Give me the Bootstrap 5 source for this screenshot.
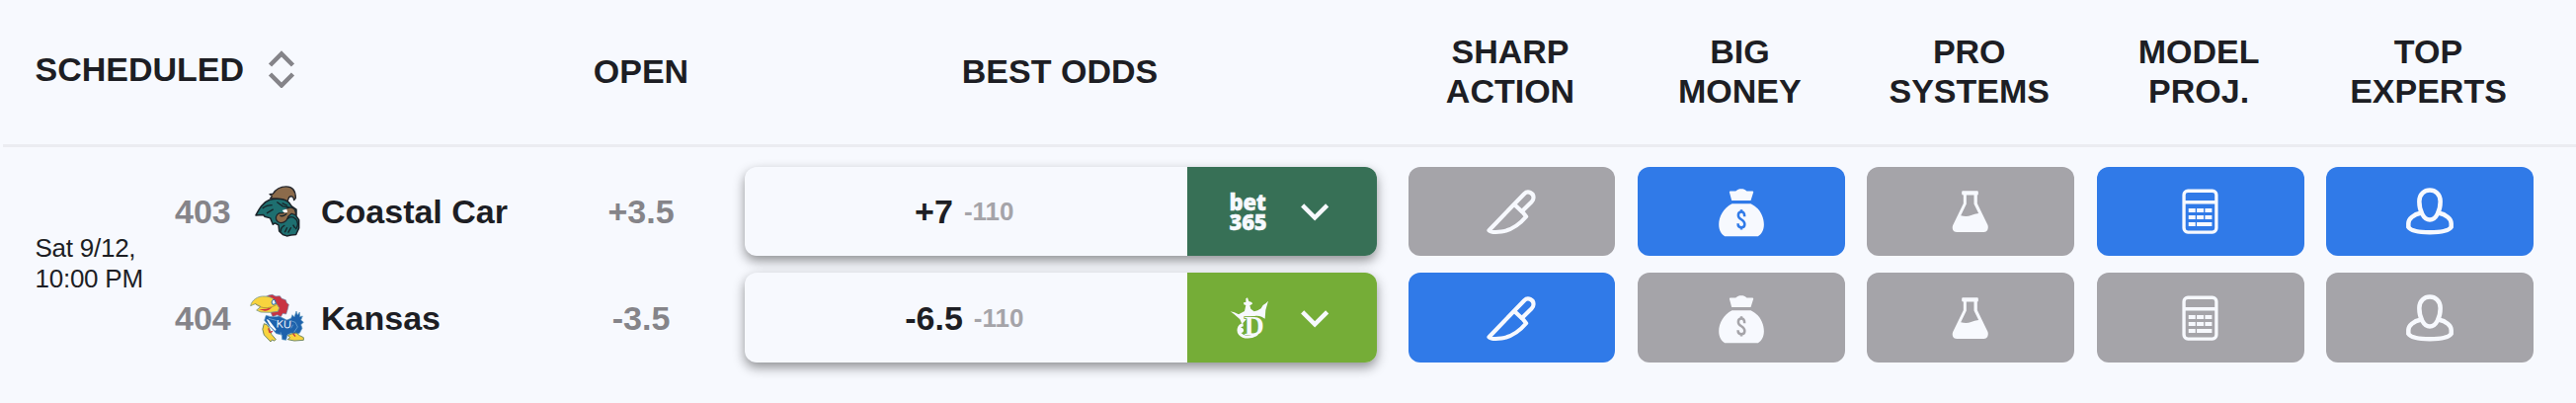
<!DOCTYPE html>
<html lang="en">
<head>
  <meta charset="UTF-8">
  <meta name="viewport" content="width=device-width, initial-scale=1.0">
  <title>Best Odds</title>
  <link href="https://cdn.jsdelivr.net/npm/bootstrap@5.3.0/dist/css/bootstrap.min.css" rel="stylesheet">
  <style>
    body {
      min-height: 100vh;
      background-color: #f7f9fe;
      color: #1d1e24;
      font-family: "Liberation Sans", Arial, sans-serif;
      font-size: 34px;
      line-height: 40px;
    }
    .board-head {
      height: 149px;
      margin-left: 3px;
      padding: 0 43px 3px 32.5px;
      border-bottom: 3px solid #ebecf1;
    }
    .head-scheduled { width: 526.5px; padding-bottom: 3px; }
    .head-open { width: 174px; }
    .head-odds { width: 638px; margin-left: 18px; }
    .head-signals { margin-left: 32px; }
    .board-body { padding: 19.9px 43px 0 35.5px; }
    .game-time {
      width: 141.5px;
      font-size: 26px;
      line-height: 31px;
      letter-spacing: -.25px;
      padding-bottom: 1px;
    }
    .game-lines { gap: 17.2px; }
    .game-line { height: 90.4px; }
    .line-no { width: 74px; }
    .line-logo { width: 60px; height: 60px; }
    .line-team { width: 237px; margin-left: 14px; }
    .line-open { width: 174px; }
    .muted-val { color: #858489; }
    .odds-box {
      width: 640px;
      margin-left: 18px;
      border-radius: 12px;
      background-color: #f7f9fe;
      box-shadow: 0 5px 12px rgba(0, 0, 0, .42);
    }
    .odds-price { gap: 11px; padding-right: 3px; }
    .odds-juice { font-size: 26px; color: #a5a4a9; }
    .book {
      width: 192.4px;
      padding-left: 43px;
      gap: 31px;
      color: #f7f9fe;
      background-color: #377056;
    }
    .book-dk { background-color: #75ad37; }
    .book-name {
      width: 40px;
      font: 800 22px/20px "Open Sans", sans-serif;
      letter-spacing: -.3px;
      -webkit-text-stroke: .4px currentColor;
    }
    .signals { width: 1139.5px; gap: 22.4px; }
    .line-signals { margin-left: 31.5px; }
    .signal {
      flex: 1 1 0;
      color: #f7f9fe;
      border-radius: 12px;
      background-color: #a5a4a9;
    }
    .signal.on { background-color: #307ae8; }
    .signal svg { width: 60px; height: 60px; }
  </style>
</head>
<body>
  <!-- Icons -->
  <svg class="d-none" xmlns="http://www.w3.org/2000/svg">
    <symbol id="knife" viewBox="61.5 57.3 180 180">
      <g fill="none" stroke="currentColor" stroke-width="12.5" stroke-linejoin="round">
        <path d="M84 205 191 94C202 83 220 91 219 106C219 111 217 115 213 119L184 147L197 163C175 189 147 205 122 209C108 211 90 211 84 205Z"/>
        <path d="M161 126 185 149"/>
      </g>
    </symbol>
    <symbol id="bag" viewBox="38.4 57.3 180 180">
      <path fill="currentColor" d="M92 89Q92 86 95 86H111C117 80 121 79 128 79S140 80 145 86H162Q165 86 165 89L157 114H99ZM100 124H157C184 137 197 163 197 187C197 204 190 216 179 223H78C67 216 60 204 60 187C60 163 74 137 100 124Z"/>
      <path fill="none" stroke="var(--hole)" stroke-width="7.5" d="M128.500 142V152M128.500 193V203M138 163C138 152 134 149 128.500 149C121 149 119 154 119 159C119 166 123 169 128.500 172C135 176 138.500 179 138.500 186C138.500 193 134 196 128.500 196C122 196 118 192 118 184"/>
    </symbol>
    <symbol id="flask" viewBox="45.5 57.3 180 180">
      <path fill="currentColor" fill-rule="evenodd" d="M112 85H156Q159 85 159 89V94Q159 98 156 98V123L188 189C191 200 186 210 176 210H94C83 210 78 200 82 189L114 123V98Q109 98 109 94V89Q109 85 112 85ZM123 98V125L106 160Q124 165 137 159Q148 155 160 153L146 125V98Z"/>
    </symbol>
    <symbol id="calc" viewBox="52.8 57.3 180 180">
      <g fill="none" stroke="currentColor" stroke-width="10">
        <rect x="92" y="85" width="98.500" height="125.500" rx="12"/>
        <path d="M92 119.500H190"/>
      </g>
      <path fill="currentColor" d="M106 138h21v12h-21zM131 138h21v12h-21zM156 138h21v12h-21zM106 159h21v12h-21zM131 159h21v12h-21zM156 159h21v12h-21zM106 180h21v12h-21zM131 180h46v12h-46z"/>
    </symbol>
    <symbol id="expert" viewBox="750 57.3 180 180">
      <g fill="none" stroke="currentColor" stroke-width="13.500">
        <path d="M840 83C856 83 872 94 872 117C872 145 859 173 840 173S808 145 808 117C808 94 824 83 840 83Z"/>
        <path d="M814 152C789 157 775 171 775 184V195C782 206 809 211 840 211S898 206 905 195V184C905 171 891 157 866 152"/>
      </g>
    </symbol>
    <symbol id="chev" viewBox="351 102.300 90 90">
      <path fill="none" stroke="currentColor" stroke-width="13.500" d="M359 129 396.500 166 434 129"/>
    </symbol>
  </svg>

  <!-- Header -->
  <div class="board-head d-flex align-items-center fw-bold text-center">
    <div class="head-scheduled d-flex align-items-center">
      SCHEDULED
      <svg class="ms-4" width="28" height="38" viewBox="0 0 28 38" fill="none" stroke="#858489" stroke-width="4.500">
        <path d="M2.500 15 14 3.500 25.500 15M2.500 24 14 35.500 25.500 24"/>
      </svg>
    </div>
    <div class="head-open">OPEN</div>
    <div class="head-odds">BEST ODDS</div>
    <div class="head-signals signals d-flex">
      <div class="flex-fill w-100">SHARP<br>ACTION</div>
      <div class="flex-fill w-100">BIG<br>MONEY</div>
      <div class="flex-fill w-100">PRO<br>SYSTEMS</div>
      <div class="flex-fill w-100">MODEL<br>PROJ.</div>
      <div class="flex-fill w-100">TOP<br>EXPERTS</div>
    </div>
  </div>

  <!-- Game -->
  <div class="board-body d-flex align-items-center">
    <div class="game-time">Sat 9/12,<br>10:00 PM</div>
    <div class="game-lines d-flex flex-column fw-bold">

      <div class="game-line d-flex align-items-center">
        <div class="line-no muted-val">403</div>
        <svg class="line-logo" viewBox="33 42.300 180 180" stroke-linejoin="round">
          <path fill="#8c6b4b" stroke="#24262b" stroke-width="4" d="M101 93 106 86 99 80 109 79C117 66 130 57 149 57C166 57 178 68 178 92L173 98C172 87 166 84 158 89L153 102Q125 91 101 93Z"/>
          <path fill="#1e6f70" stroke="#1c2329" stroke-width="4.500" d="M57 144C68 123 78 105 99 97C121 91 147 94 159 107L166 117L180 127V147L188 158V183L179 203L164 204L151 207L139 203L128 192L126 174L115 168L109 172L101 153L84 148L80 143Z"/>
          <path fill="#8c6b4b" stroke="#1c2329" stroke-width="3.500" d="M162 120C172 121 179 130 178 144L166 139C159 145 153 147 153 154C149 165 135 171 124 164C114 156 118 142 128 138L142 137L150 124Z"/>
          <path fill="#fff" d="M137 129 151 125 153 135 143 136Z"/>
          <path fill="none" stroke="#172429" stroke-width="4" d="M77 123Q90 113 107 113M90 138 110 126M121 104 139 117 158 120M137 107 153 115M130 145Q139 150 151 139M153 155Q165 143 179 156Q190 170 178 187M145 175Q132 180 133 194M152 181 145 196M164 181 155 197M170 173 176 183"/>
        </svg>
        <div class="line-team">Coastal Car</div>
        <div class="line-open muted-val text-center">+3.5</div>
        <div class="odds-box h-100 d-flex overflow-hidden">
          <div class="odds-price flex-fill d-flex align-items-center justify-content-center">+7 <span class="odds-juice">-110</span></div>
          <div class="book d-flex align-items-center">
            <div class="book-name">bet<br>365</div>
            <svg width="30" height="30"><use href="#chev"/></svg>
          </div>
        </div>
        <div class="line-signals signals h-100 d-flex">
          <div class="signal d-flex align-items-center justify-content-center"><svg><use href="#knife"/></svg></div>
          <div class="signal on d-flex align-items-center justify-content-center"><svg style="--hole: #307ae8"><use href="#bag"/></svg></div>
          <div class="signal d-flex align-items-center justify-content-center"><svg><use href="#flask"/></svg></div>
          <div class="signal on d-flex align-items-center justify-content-center"><svg><use href="#calc"/></svg></div>
          <div class="signal on d-flex align-items-center justify-content-center"><svg><use href="#expert"/></svg></div>
        </div>
      </div>

      <div class="game-line d-flex align-items-center">
        <div class="line-no muted-val">404</div>
        <svg class="line-logo" viewBox="33 365 180 180" stroke-linejoin="round">
          <path fill="#c93342" stroke="#6d83a4" stroke-width="2" d="M84 392 96 386 107 384 117 389 130 388 136 396 148 400 151 409 157 414 154 427 149 443 139 441 133 451 122 445 108 451Z"/>
          <path fill="#1e62ac" stroke="#5f9abf" stroke-width="2" d="M88 447Q107 455 127 449L151 461L164 456L168 445L174 452L180 434L184 446L190 437L191 451L199 449L194 461L202 468L194 475L198 486L190 501L171 507L166 500L153 506L149 522L137 520L136 506L119 502L107 488L95 477L83 462Z"/>
          <path fill="#f8d33e" stroke="#7e9b87" stroke-width="2.500" d="M41 418C44 401 63 387 84 389C101 389 115 397 118 409L128 424L124 435L101 438L72 437L59 431L72 420L55 412Z"/>
          <path fill="#d32f3e" d="M67 429Q90 429 106 422Q98 433 84 433Z"/>
          <path fill="none" stroke="#947b35" stroke-width="2" d="M55 411Q69 425 91 424Q107 423 119 415"/>
          <path fill="#fff" stroke="#2766a8" stroke-width="3" d="M105 407Q107 396 115 400L118 412 108 414Z"/>
          <path fill="#f8d33e" stroke="#748a62" stroke-width="3" d="M82 472Q92 473 97 484L105 505L118 520L113 524L106 521L102 527L82 506Q73 489 82 472ZM154 508 165 503 180 500 190 508 202 514 202 522 174 524 154 520 161 514Z"/>
          <path fill="#fff" d="M89 459 96 460 119 490 116 494 101 480Z"/>
          <path fill="none" stroke="#c93342" stroke-width="4" d="M95 486 99 499 108 495M170 502 177 511"/>
          <path fill="none" stroke="#83b5dc" stroke-width="2" d="M96 456 121 463M163 463 177 468 184 482 173 498M170 475 164 486M132 498 134 508"/>
          <text x="119" y="485" textLength="46" lengthAdjust="spacingAndGlyphs" fill="#f7f9fe" font-size="33" font-weight="400" transform="rotate(3 142 475)">KU</text>
        </svg>
        <div class="line-team">Kansas</div>
        <div class="line-open muted-val text-center">-3.5</div>
        <div class="odds-box h-100 d-flex overflow-hidden">
          <div class="odds-price flex-fill d-flex align-items-center justify-content-center">-6.5 <span class="odds-juice">-110</span></div>
          <div class="book book-dk d-flex align-items-center">
            <svg width="40" height="44" viewBox="133 404 120 132">
              <path fill="currentColor" d="M135 450 147 453 160 459 178 449 182 431 176 429 175 423 182 422 182 411 187 408 191 419 200 422 202 427 194 432 197 442 207 450 218 447 228 441 234 431 243 425 250 418 246 432 242 446 240 472 230 466C211 459 187 468 176 482L170 488 164 474 146 458Z"/>
              <text x="177" y="521" fill="currentColor" stroke="#75ad37" stroke-width="5" paint-order="stroke" font-family="Liberation Serif" font-size="80" font-weight="700" textLength="60" lengthAdjust="spacingAndGlyphs">D</text>
              <path fill="none" stroke="currentColor" stroke-width="9" d="M174 490C159 492 157 510 164 518C174 530 201 531 217 517"/>
              <circle cx="167" cy="507" r="8" fill="currentColor"/>
            </svg>
            <svg width="30" height="30"><use href="#chev"/></svg>
          </div>
        </div>
        <div class="line-signals signals h-100 d-flex">
          <div class="signal on d-flex align-items-center justify-content-center"><svg><use href="#knife"/></svg></div>
          <div class="signal d-flex align-items-center justify-content-center"><svg style="--hole: #a5a4a9"><use href="#bag"/></svg></div>
          <div class="signal d-flex align-items-center justify-content-center"><svg><use href="#flask"/></svg></div>
          <div class="signal d-flex align-items-center justify-content-center"><svg><use href="#calc"/></svg></div>
          <div class="signal d-flex align-items-center justify-content-center"><svg><use href="#expert"/></svg></div>
        </div>
      </div>

    </div>
  </div>

  <script src="https://cdn.jsdelivr.net/npm/bootstrap@5.3.0/dist/js/bootstrap.bundle.min.js"></script>
</body>
</html>
